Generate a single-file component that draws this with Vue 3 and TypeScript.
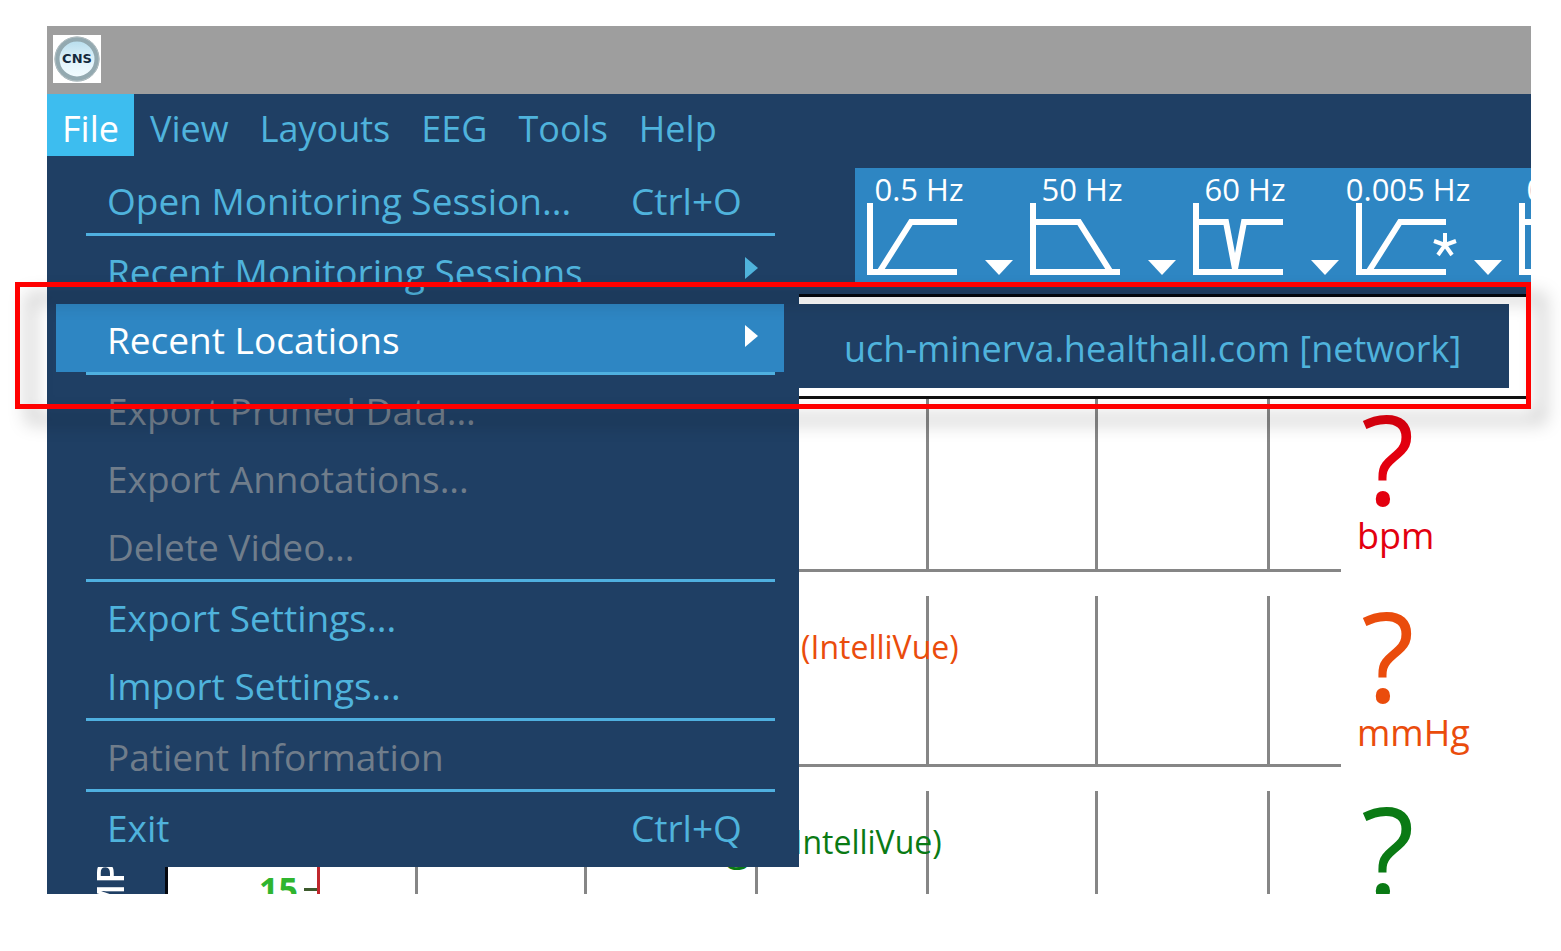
<script setup lang="ts">
interface MenuEntry {
  label: string
  shortcut?: string
  submenu?: boolean
  active?: boolean
  disabled?: boolean
}

interface Filter {
  label: string
  path: string
  star?: boolean
}

interface Track {
  name: string
  prefix?: string
  source?: string
  unit?: string
  tick?: string
}

const menus: string[] = ['File', 'View', 'Layouts', 'EEG', 'Tools', 'Help']

const groups: MenuEntry[][] = [
  [{ label: 'Open Monitoring Session...', shortcut: 'Ctrl+O' }],
  [
    { label: 'Recent Monitoring Sessions', submenu: true },
    { label: 'Recent Locations', submenu: true, active: true },
  ],
  [
    { label: 'Export Pruned Data...', disabled: true },
    { label: 'Export Annotations...', disabled: true },
    { label: 'Delete Video...', disabled: true },
  ],
  [{ label: 'Export Settings...' }, { label: 'Import Settings...' }],
  [{ label: 'Patient Information', disabled: true }],
  [{ label: 'Exit', shortcut: 'Ctrl+Q' }],
]

const filters: Filter[] = [
  { label: '0.5 Hz', path: 'M13 68 L44 19 H90' },
  { label: '50 Hz', path: 'M3 19 H49 L80 68' },
  { label: '60 Hz', path: 'M3 19 H33 L42 66 L51 19 H90' },
  { label: '0.005 Hz', path: 'M13 68 L44 19 H90', star: true },
  { label: '0.1 Hz', path: 'M3 19 H49 L80 68' },
]

const tracks: Track[] = [
  { name: 'heart', unit: 'bpm' },
  { name: 'pressure', source: '(IntelliVue)', unit: 'mmHg' },
  { name: 'gas', prefix: 'g', source: '(IntelliVue)', tick: '15' },
]
</script>

<template>
  <main class="page">
    <section class="window">
      <header class="titlebar">
        <svg class="logo" viewBox="0 0 48 48" role="img" aria-label="CNS">
          <defs>
            <linearGradient id="disc" x1="0" y1="0" x2="0" y2="1">
              <stop offset="0" stop-color="#b5dcec" />
              <stop offset="0.6" stop-color="#e4f5fc" />
              <stop offset="1" stop-color="#f4fcff" />
            </linearGradient>
          </defs>
          <rect width="48" height="48" fill="#fff" />
          <circle cx="24" cy="24" r="20" fill="url(#disc)" stroke="#93a9b0" stroke-width="5" />
          <circle cx="24" cy="24" r="22" fill="none" stroke="#b4bfc2" stroke-width="1" />
          <text x="24" y="28" text-anchor="middle" class="logo-text">CNS</text>
        </svg>
      </header>

      <nav class="menubar">
        <button
          v-for="(menu, i) in menus"
          :key="menu"
          type="button"
          class="menubar-item"
          :class="{ open: i === 0 }"
        >{{ menu }}</button>
      </nav>

      <div class="workspace">
        <div class="toolbar">
          <button v-for="filter in filters" :key="filter.label" type="button" class="filter">
            <span class="filter-label">{{ filter.label }}</span>
            <span class="filter-row">
              <svg class="filter-icon" viewBox="0 0 92 72" fill="none" stroke="#fff" stroke-width="6">
                <path d="M3 0 V69 H90" />
                <path :d="filter.path" />
                <path v-if="filter.star" stroke-width="4" d="M89 30 V42 M89 42 L78 38 M89 42 L100 38 M89 42 L82 52 M89 42 L96 52" />
              </svg>
              <svg class="filter-caret" viewBox="0 0 28 15"><path d="M0 0 H28 L14 15 Z" fill="#fff" /></svg>
            </span>
          </button>
        </div>

        <div class="monitor">
          <aside class="rail"><span class="rail-text">MP</span></aside>
          <div class="tracks">
            <div class="strip"></div>
            <article v-for="track in tracks" :key="track.name" class="track" :class="track.name">
              <div class="chart">
                <div class="axis">
                  <span v-if="track.tick" class="tick">{{ track.tick }}</span>
                </div>
                <div class="cells"><i v-for="n in 7" :key="n" class="cell"></i></div>
                <p v-if="track.source" class="source">
                  <span v-if="track.prefix" class="prefix">{{ track.prefix }}</span>{{ track.source }}
                </p>
              </div>
              <div class="readout">
                <strong class="value">?</strong>
                <span v-if="track.unit" class="unit">{{ track.unit }}</span>
              </div>
            </article>
          </div>
        </div>

        <div class="menu">
          <ul v-for="(group, g) in groups" :key="g" class="group">
            <li v-for="entry in group" :key="entry.label" class="entry">
              <button type="button" class="command" :class="{ active: entry.active }" :disabled="entry.disabled">
                <span class="command-label">{{ entry.label }}</span>
                <span v-if="entry.shortcut" class="shortcut">{{ entry.shortcut }}</span>
                <svg v-if="entry.submenu" class="arrow" viewBox="0 0 13 22"><path d="M0 0 L13 11 L0 22 Z" fill="currentColor" /></svg>
              </button>
              <div v-if="entry.active" class="submenu">
                <button type="button" class="location">uch-minerva.healthall.com [network]</button>
              </div>
            </li>
          </ul>
        </div>
      </div>
    </section>
    <div class="callout"></div>
  </main>
</template>

<style>
body {
  margin: 0;
  background: #fff;
}
</style>

<style scoped>
.page {
  position: relative;
  box-sizing: border-box;
  height: 100vh;
  padding: 26px 30px 57px 47px;
  overflow: hidden;
  font-family: "Open Sans", "Noto Sans", sans-serif;
  font-size: 37px;
  color: #4fb3dc;
}

button {
  margin: 0;
  padding: 0;
  border: 0;
  background: none;
  font: inherit;
  color: inherit;
  white-space: nowrap;
  text-align: left;
}

.window {
  display: flex;
  flex-direction: column;
  height: 100%;
  overflow: hidden;
  background: #1f3f64;
}

.titlebar {
  display: flex;
  align-items: center;
  flex: none;
  box-sizing: border-box;
  height: 68px;
  padding: 0 0 2px 6px;
  background: #9e9e9e;
}

.logo {
  width: 48px;
  height: 48px;
}

.logo-text {
  font: bold 13px "DejaVu Sans", sans-serif;
  fill: #14293c;
}

.menubar {
  display: flex;
  flex: none;
  gap: 1px;
  height: 62px;
  font-size: 36px;
}

.menubar-item {
  padding: 0 15px;
  line-height: 70px;
}

.menubar-item.open {
  background: #3dbdef;
  color: #fff;
}

.workspace {
  position: relative;
  display: flex;
  flex-direction: column;
  flex: 1;
  min-height: 0;
}

.toolbar {
  display: flex;
  flex: none;
  height: 116px;
  margin: 12px 0 10px 808px;
  overflow: hidden;
  background: #2e86c3;
  color: #fff;
}

.filter {
  flex: none;
  width: 163px;
  padding-left: 12px;
}

.filter-label {
  display: flex;
  justify-content: center;
  width: 104px;
  height: 35px;
  margin-top: -10px;
  font-size: 31px;
  line-height: 43px;
}

.filter-row {
  display: flex;
  align-items: flex-end;
  gap: 26px;
}

.filter-icon {
  width: 92px;
  height: 72px;
  overflow: visible;
}

.filter-caret {
  width: 28px;
  height: 15px;
}

.monitor {
  display: flex;
  flex: 1;
  min-height: 0;
}

.rail {
  display: flex;
  flex: none;
  align-items: flex-end;
  justify-content: center;
  box-sizing: border-box;
  width: 118px;
  padding-left: 6px;
}

.rail-text {
  writing-mode: vertical-rl;
  transform: rotate(180deg);
  margin-bottom: -24px;
  color: #fff;
  font-weight: 600;
}

.tracks {
  flex: 1;
  min-width: 0;
  overflow: hidden;
  border-top: 3px solid #05080f;
  border-left: 3px solid #05080f;
  background: #fff;
}

.strip {
  height: 99px;
  border-bottom: 3px solid #111;
}

.track {
  display: flex;
  height: 171px;
  margin-bottom: 24px;
}

.track.heart {
  height: 173px;
  color: #e3000f;
}

.track.pressure {
  color: #ea4c0c;
}

.track.gas {
  color: #0a7a14;
}

.chart {
  position: relative;
  display: flex;
  flex: 1;
  border-bottom: 3px solid #868686;
}

.axis {
  flex: none;
  width: 149px;
  border-right: 3px solid #c0272d;
}

.tick {
  display: flex;
  align-items: center;
  justify-content: flex-end;
  gap: 6px;
  margin-top: 82px;
  font-size: 34px;
  font-weight: bold;
  line-height: 32px;
  color: #2fb52f;
}

.tick::after {
  content: "";
  width: 13px;
  height: 3px;
  background: #3d5a2d;
}

.cells {
  display: grid;
  flex: 1;
  grid-template-columns: 98fr 169fr 171fr 172fr 169fr 172fr 71fr;
}

.cell {
  border-right: 3px solid #868686;
}

.cell:last-child {
  border-right: 0;
}

.source {
  position: absolute;
  top: 29px;
  left: 633px;
  margin: 0;
  font-size: 32px;
  line-height: 44px;
}

.gas .source {
  left: 616px;
}

.prefix {
  position: absolute;
  right: 100%;
  margin-right: 34px;
  font-size: 44px;
}

.readout {
  display: flex;
  flex: none;
  flex-direction: column;
  width: 174px;
  padding-left: 16px;
}

.value {
  padding-left: 4px;
  font-size: 124px;
  font-weight: normal;
  line-height: 116px;
}

.unit {
  font-size: 36px;
  line-height: 42px;
}

.menu {
  position: absolute;
  top: 0;
  left: 0;
  box-sizing: border-box;
  width: 752px;
  padding: 9px 15px 7px 9px;
  background: #1f3f64;
}

.group {
  margin: 0;
  padding: 0;
  list-style: none;
}

.group + .group::before {
  content: "";
  display: block;
  height: 3px;
  margin: 0 9px 0 30px;
  background: #4fb0e0;
}

.entry {
  position: relative;
}

.command {
  display: flex;
  align-items: center;
  width: 100%;
  height: 68px;
  padding: 4px 26px 0 51px;
  line-height: 64px;
}

.command.active {
  background: #2e86c3;
  color: #fff;
}

.command:disabled {
  color: #707d8b;
}

.command-label {
  flex: 1;
}

.shortcut {
  width: 127px;
}

.arrow {
  width: 13px;
  height: 22px;
  margin-bottom: 8px;
}

.submenu {
  position: absolute;
  top: 0;
  left: 743px;
  background: #1f3f64;
}

.location {
  height: 84px;
  padding: 6px 48px 0 45px;
  font-size: 36px;
  line-height: 78px;
}

.callout {
  position: absolute;
  top: 282px;
  right: 30px;
  left: 15px;
  box-sizing: border-box;
  height: 127px;
  border: 5px solid #f00;
  filter: drop-shadow(13px 13px 9px rgba(0, 0, 0, 0.36));
  pointer-events: none;
}
</style>
